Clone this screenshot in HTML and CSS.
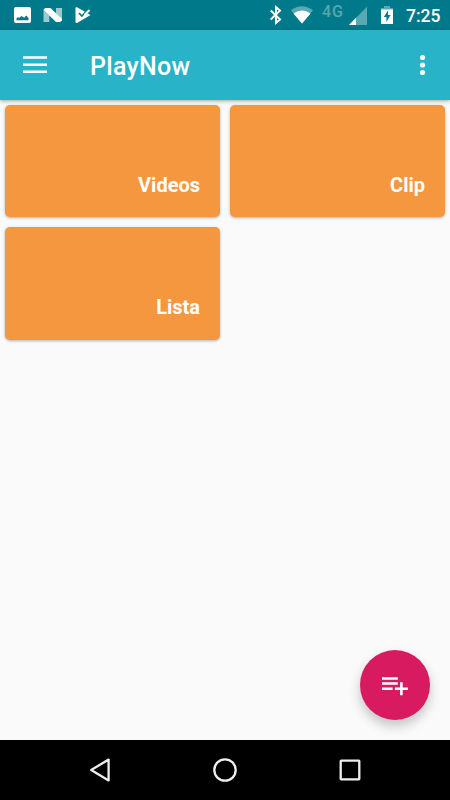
FILE: index.html
```html
<!DOCTYPE html>
<html lang="es">
<head>
  <meta charset="UTF-8"/>
  <meta name="viewport" content="width=device-width, initial-scale=1.0"/>
  <title>PlayNow</title>
  <link rel="stylesheet" href="styles.css">
</head>

<body>
<div class="status-bar">
  <div class="notifications">
    <svg width="17" height="30" viewBox="14 0 17 30">
      <path fill="#fff" fill-rule="evenodd" d="M16 7h13q2 0 2 2v12q0 2-2 2H16q-2 0-2-2V9q0-2 2-2zM16.500 20.300h12V18l-2.300-2.600-2 2.300-2.800-1.700-2.300 2.100-1.200-1-1.400 1.500z"/>
    </svg>
    <svg width="20" height="30" viewBox="43 0 20 30">
      <path fill="#fff" fill-opacity=".6" d="M43.500 10l5.800 5.500V22h-5.800zM56 8h6v12l-6-5.500z"/>
      <path fill="#fff" d="M45 8h5.500L62 19v1.500L60 22h-4L43.500 10z"/>
    </svg>
    <svg width="16" height="30" viewBox="75 0 16 30">
      <path fill="#fff" d="M75.500 8.300q0-1.600 1.500-1L90.500 15 77 22.900q-1.500.600-1.500-1z"/>
      <path fill="none" stroke="#007a8a" stroke-width="1.700" d="M79 13l2.800 3 5.800-6"/>
      <path fill="none" stroke="#fff" stroke-width="2" d="M84.500 15l5-5"/>
    </svg>
  </div>
  <div class="system">
    <svg class="bluetooth" width="12" height="30" viewBox="270 0 12 30">
      <path fill="none" stroke="#fff" stroke-width="2" d="M270.700 10.500l9.300 8.900-4 3.400V7.200l4 3.400-9.300 8.900"/>
    </svg>
    <svg class="wifi" width="22" height="30" viewBox="291 0 22 30">
      <path fill="#fff" fill-opacity=".35" d="M291 10.200Q302 2.500 313 10.200L302 23.500z"/>
      <path fill="#fff" d="M293.500 13.400Q302 7.800 310.500 13.400L302 23.500z"/>
    </svg>
    <span class="network">4G</span>
    <svg class="signal" width="18" height="30" viewBox="349 0 18 30">
      <path fill="#fff" fill-opacity=".35" d="M367 6.800V25h-18z"/>
      <path fill="#fff" d="M356 17.800V25h-7z"/>
    </svg>
    <svg class="battery" width="13" height="30" viewBox="381 0 13 30">
      <path fill="#fff" fill-opacity=".35" d="M384 6h6v2h3v2h-12V8h3z"/>
      <path fill="#fff" fill-rule="evenodd" d="M381 9.500h12v14.500h-12zM388 10.500l-4.200 6.500h2.600v5l4.200-7H388z"/>
    </svg>
    <span class="clock">7:25</span>
  </div>
</div>

<header class="toolbar">
  <svg width="24" height="18" viewBox="0 0 24 18">
    <path fill="#fff" d="M0 .300h24v2.500H0zM0 7.400h24v2.500H0zM0 14.400h24v2.500H0z"/>
  </svg>
  <h1>PlayNow</h1>
  <svg width="6" height="22" viewBox="0 0 6 22">
    <g fill="#fff">
      <circle cx="2.500" cy="3.500" r="2.600"/>
      <circle cx="2.500" cy="11" r="2.600"/>
      <circle cx="2.500" cy="18.500" r="2.600"/>
    </g>
  </svg>
</header>

<main class="cards">
  <div class="card">Videos</div>
  <div class="card">Clip</div>
  <div class="card">Lista</div>
</main>

<button class="fab" aria-label="Agregar a la lista">
  <svg width="70" height="70" viewBox="360 650 70 70">
    <path fill="#fff" d="M382 677.200h15.800v2.500H382zM382 682.300h15.800v2.500H382zM382 687.500h10.600v2.500H382zM400.100 682.300h2.600v5.200h5.200v2.500h-5.200v5.200h-2.600V690h-5.200v-2.500h5.200z"/>
  </svg>
</button>

<nav class="nav-bar">
  <svg width="26" height="26" viewBox="0 0 26 26">
    <path d="M21.600 2.600v20.800L4.200 13z"/>
  </svg>
  <svg width="26" height="26" viewBox="0 0 26 26">
    <circle cx="13" cy="13" r="10.700"/>
  </svg>
  <svg width="26" height="26" viewBox="0 0 26 26">
    <rect x="3.700" y="3.700" width="18.600" height="18.600" rx=".5"/>
  </svg>
</nav>
</body>
</html>
```

FILE: styles.css
```css
body {
    display: flex;
    flex-direction: column;
    height: 100vh;
    margin: 0;
    background: #fafafa;
    color: #fff;
    font-family: Roboto, "Liberation Sans", sans-serif;
    overflow: hidden;
}

svg {
    display: block;
    flex: none;
}

/* status bar */
.status-bar {
    display: flex;
    justify-content: space-between;
    height: 30px;
    padding: 0 10px 0 14px;
    background: #007a8a;
}

.notifications,
.system {
    display: flex;
}

.notifications {
    gap: 12px;
}

.bluetooth {
    margin-right: 9px;
}

.wifi {
    margin-right: 9px;
}

.network {
    width: 27px;
    padding-top: 2px;
    color: rgba(255, 255, 255, 0.35);
    font-size: 16px;
    font-weight: 500;
    letter-spacing: 0.8px;
    line-height: 20px;
}

.signal {
    margin-right: 14px;
}

.battery {
    margin-right: 12px;
}

.clock {
    width: 34px;
    font-size: 17.5px;
    font-weight: 500;
    line-height: 32px;
    white-space: nowrap;
}

/* toolbar */
.toolbar {
    position: relative;
    display: flex;
    align-items: center;
    height: 70px;
    padding: 0 24px 0 23px;
    background: #29b3c8;
    box-shadow: 0 1px 4px rgba(0, 0, 0, 0.35);
}

.toolbar h1 {
    flex: 1;
    margin: 2px 0 0 43px;
    font-size: 25px;
    font-weight: 500;
    letter-spacing: 0.3px;
}

/* cards */
.cards {
    flex: 1;
    display: grid;
    grid-template-columns: 1fr 1fr;
    grid-auto-rows: 112.4px;
    gap: 10px;
    padding: 5px;
}

.card {
    display: flex;
    align-items: flex-end;
    justify-content: flex-end;
    box-sizing: border-box;
    padding: 0 20px 20.6px;
    border-radius: 5px;
    background: #f5973e;
    box-shadow: 0 1px 3px rgba(0, 0, 0, 0.3);
    font-size: 20px;
    font-weight: 700;
    line-height: 24px;
}

.fab {
    position: absolute;
    right: 20px;
    bottom: 80px;
    width: 70px;
    height: 70px;
    padding: 0;
    border: none;
    border-radius: 50%;
    background: #d81b60;
    box-shadow: 0 6px 12px rgba(0, 0, 0, 0.22);
    cursor: pointer;
}

/* system navigation */
.nav-bar {
    display: flex;
    align-items: center;
    justify-content: center;
    gap: 99px;
    height: 60px;
    background: #000;
}

.nav-bar svg {
    fill: none;
    stroke: #eee;
    stroke-width: 2.3;
    stroke-linejoin: round;
}
```
